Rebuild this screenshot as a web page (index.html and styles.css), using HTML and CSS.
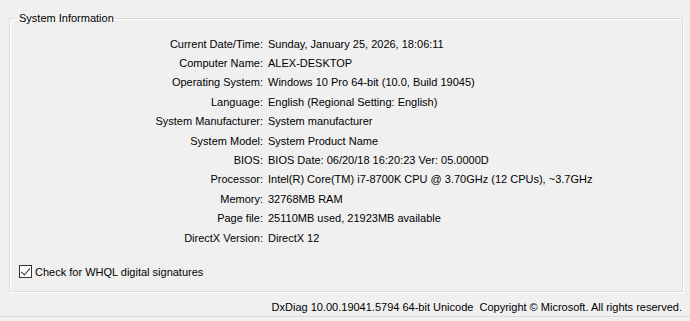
FILE: index.html
```html
<!DOCTYPE html>
<html lang="en">
  <head>
    <meta charset="UTF-8" />
    <title>DirectX Diagnostic Tool</title>
    <link rel="stylesheet" href="styles.css">
  </head>
  <body>
    <fieldset class="group">
      <legend>System Information</legend>
      <div class="info">
        <span class="label">Current Date/Time:</span><span class="value">Sunday, January 25, 2026, 18:06:11</span>
        <span class="label">Computer Name:</span><span class="value">ALEX-DESKTOP</span>
        <span class="label">Operating System:</span><span class="value">Windows 10 Pro 64-bit (10.0, Build 19045)</span>
        <span class="label">Language:</span><span class="value">English (Regional Setting: English)</span>
        <span class="label">System Manufacturer:</span><span class="value">System manufacturer</span>
        <span class="label">System Model:</span><span class="value">System Product Name</span>
        <span class="label">BIOS:</span><span class="value">BIOS Date: 06/20/18 16:20:23 Ver: 05.0000D</span>
        <span class="label">Processor:</span><span class="value">Intel(R) Core(TM) i7-8700K CPU @ 3.70GHz (12 CPUs), ~3.7GHz</span>
        <span class="label">Memory:</span><span class="value">32768MB RAM</span>
        <span class="label">Page file:</span><span class="value">25110MB used, 21923MB available</span>
        <span class="label">DirectX Version:</span><span class="value">DirectX 12</span>
      </div>
      <label class="check">
        <input type="checkbox" checked />
        <span>Check for WHQL digital signatures</span>
      </label>
    </fieldset>

    <footer class="status">
      DxDiag 10.00.19041.5794 64-bit Unicode&nbsp; Copyright © Microsoft. All rights reserved.
    </footer>
  </body>
</html>
```

FILE: styles.css
```css
* {
  margin: 0;
  padding: 0;
  box-sizing: border-box;
}

html,
body {
  height: 100%;
}

body {
  background-color: #f0f0f0;
  color: #000;
  font-family: "Liberation Sans", Arial, sans-serif;
  font-size: 11px;
  overflow: hidden;
}

/* group box */
.group {
  margin: 11px 0 0 9px;
  width: 674px;
  height: 281px;
  border: 1px solid #dcdcdc;
  box-shadow: inset 1px 1px 0 #fff, 1px 1px 0 #fff;
  padding: 0 9px;
}

.group legend {
  margin-left: -2px;
  padding: 0 2px;
  line-height: 14px;
}

/* label / value table */
.info {
  display: grid;
  grid-template-columns: 244px auto;
  column-gap: 5px;
  grid-auto-rows: 19.4px;
  align-items: center;
  margin-top: 9px;
}

.label {
  text-align: right;
  white-space: nowrap;
}

.value {
  white-space: nowrap;
}

/* checkbox */
.check {
  display: flex;
  align-items: center;
  gap: 3px;
  margin-top: 18px;
}

.check input {
  appearance: none;
  width: 13px;
  height: 13px;
  border: 1px solid #333;
  background-color: #fff;
  position: relative;
}

.check input:checked::after {
  content: "";
  position: absolute;
  left: 3px;
  top: 0;
  width: 4px;
  height: 8px;
  border-right: 1px solid #333;
  border-bottom: 1px solid #333;
  transform: rotate(40deg);
}

/* status bar */
.status {
  margin-top: 5px;
  height: 20px;
  padding-right: 8px;
  text-align: right;
  line-height: 20px;
  border-bottom: 1px solid #dcdcdc;
}
```
